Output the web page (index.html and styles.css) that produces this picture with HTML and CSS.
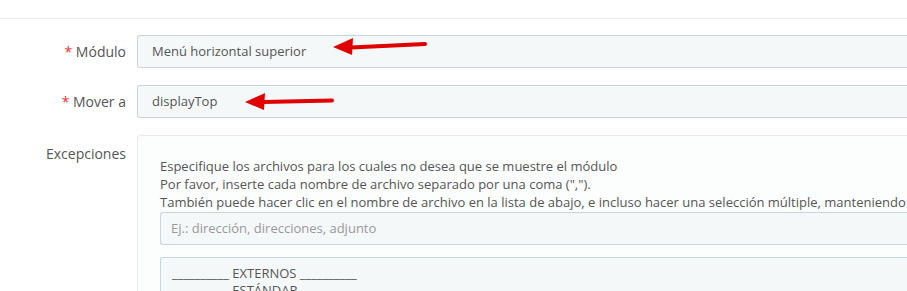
FILE: index.html
```html
<!DOCTYPE html>
<html lang="es">
<head>
<meta charset="utf-8">
<link rel="stylesheet" href="styles.css">
</head>
<body>
<div class="page">
  <div class="topbar"></div>
  <div class="form">
    <div class="row">
      <label class="label"><span class="req">*</span> Módulo</label>
      <div class="field">
        <div class="input">Menú horizontal superior</div>
        <svg class="arrow a1" width="100" height="20" viewBox="0 0 100 20"><polygon points="0,10 20,1 19,18" fill="#e00000"/><path d="M18 10.5 L92 7" stroke="#e00000" stroke-width="4" stroke-linecap="round"/></svg>
      </div>
    </div>
    <div class="row second">
      <label class="label"><span class="req">*</span> Mover a</label>
      <div class="field">
        <div class="input">displayTop</div>
        <svg class="arrow a2" width="95" height="20" viewBox="0 0 95 20"><polygon points="0,10 20,1 19,18" fill="#e00000"/><path d="M18 10 L87 8.5" stroke="#e00000" stroke-width="4" stroke-linecap="round"/></svg>
      </div>
    </div>
    <div class="row exc">
      <label class="label">Excepciones</label>
      <div class="panel">
        <p class="help">Especifique los archivos para los cuales no desea que se muestre el módulo<br>Por favor, inserte cada nombre de archivo separado por una coma (",").<br>También puede hacer clic en el nombre de archivo en la lista de abajo, e incluso hacer una selección múltiple, manteniendo pulsada la tecla Ctrl.</p>
        <div class="input ph">Ej.: dirección, direcciones, adjunto</div>
        <div class="select">
          <div>__________ EXTERNOS __________</div>
          <div>__________ ESTÁNDAR __________</div>
        </div>
      </div>
    </div>
  </div>
</div>
</body>
</html>
```

FILE: styles.css
```css
html, body {
  margin: 0;
  padding: 0;
  background: #fff;
  overflow: hidden;
}
body {
  font-family: "Open Sans", "Liberation Sans", sans-serif;
  font-size: 13px;
  color: #555;
}
.page {
  width: 907px;
  height: 291px;
  overflow: hidden;
}
.topbar {
  height: 18px;
  border-bottom: 1px solid #e9eaeb;
}
.form {
  padding-top: 16px;
}
.row {
  display: flex;
  align-items: center;
  margin-bottom: 17px;
}
.row.second {
  margin-top: 1px;
}
.label {
  width: 137px;
  flex: none;
  text-align: right;
  padding-right: 11px;
  box-sizing: border-box;
  font-size: 14px;
  color: #555;
}
.req {
  color: #e33;
}
.field {
  position: relative;
  flex: 1;
}
.input {
  height: 33px;
  box-sizing: border-box;
  border: 1px solid #c7d6db;
  border-right: none;
  border-radius: 3px 0 0 3px;
  background: #f5f8f9;
  padding: 0 14px;
  line-height: 31px;
  color: #555;
  white-space: nowrap;
}
.arrow {
  position: absolute;
  top: 0;
}
.a1 {
  left: 196px;
  top: 2px;
}
.a2 {
  left: 108px;
  top: 7px;
}
.exc {
  align-items: flex-start;
}
.exc .label {
  padding-top: 9px;
}
.panel {
  flex: 1;
  min-width: 0;
  border: 1px solid #e6ecee;
  border-right: none;
  background: #fcfdfd;
  padding: 21px 0 0 22px;
  height: 200px;
  border-radius: 3px 0 0 0;
  overflow: hidden;
}
.help {
  margin: 0 0 1px;
  line-height: 18px;
  white-space: nowrap;
  color: #555;
}
.ph {
  color: #999;
  padding: 0 10px;
}
.select {
  margin-top: 12px;
  border: 1px solid #c7d6db;
  border-right: none;
  border-radius: 3px 0 0 0;
  background: #f5f8f9;
  padding: 7px 11px;
  line-height: 17px;
  color: #555;
  white-space: nowrap;
}
```
